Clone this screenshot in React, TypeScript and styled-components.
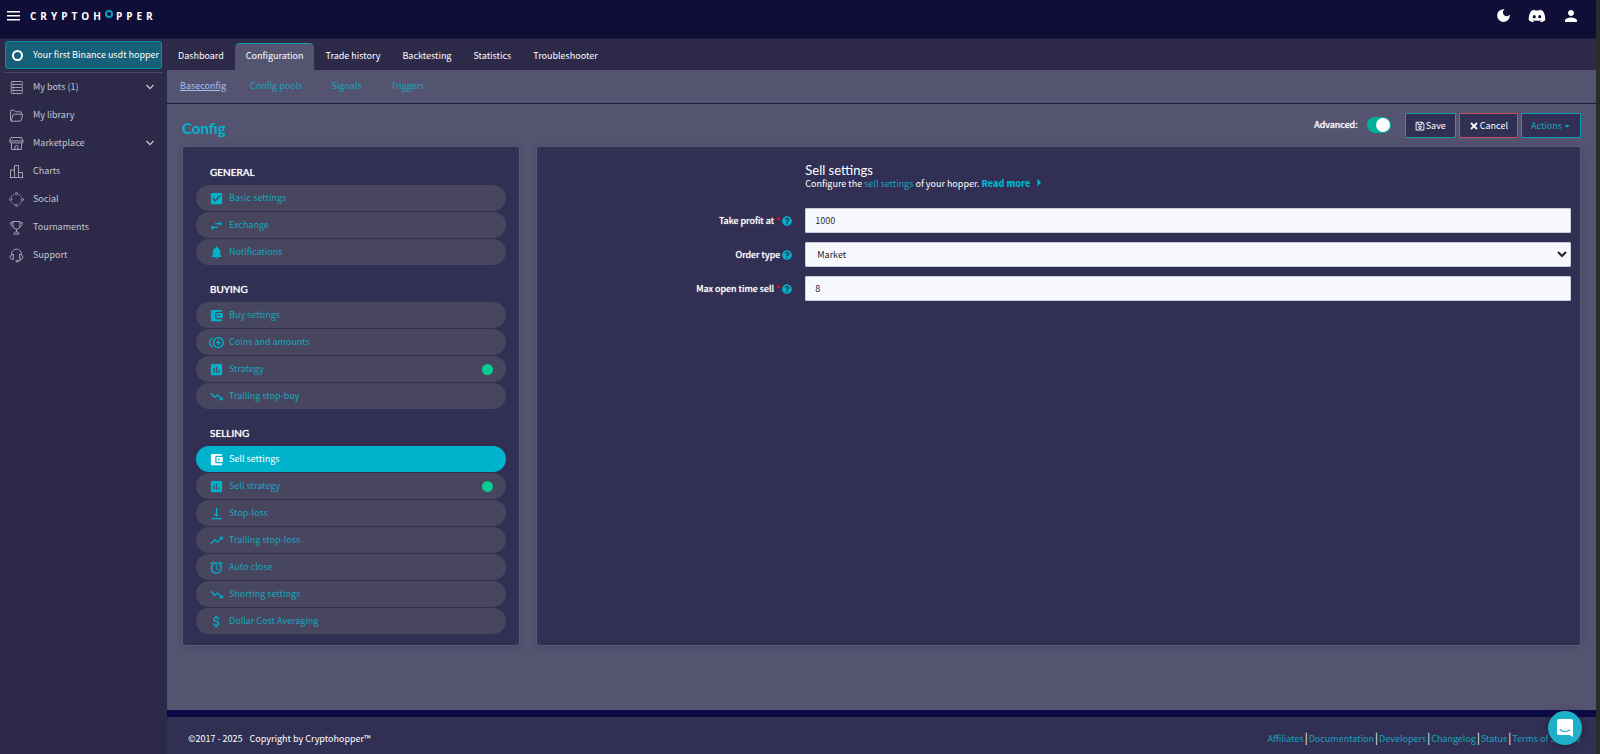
import React, { useState } from "react";
import styled, { createGlobalStyle, css } from "styled-components";
import {
  MdAccountBalanceWallet,
  MdAlarm,
  MdAssessment,
  MdAttachMoney,
  MdCheckBox,
  MdControlPointDuplicate,
  MdDarkMode,
  MdNotifications,
  MdPerson,
  MdSwapHoriz,
  MdTrendingDown,
  MdTrendingUp,
  MdVerticalAlignBottom,
} from "react-icons/md";
import { FaCaretDown, FaCaretRight, FaDiscord, FaQuestionCircle, FaRegSave, FaTimes } from "react-icons/fa";

const color = {
  topbar: "#100e36",
  chrome: "#2c2a48",
  page: "#545370",
  panel: "#312f53",
  panelEdge: "#5b5877",
  pill: "#48465f",
  teal: "#00b3cc",
  link: "#16a5be",
  navy: "#0c0a45",
  white: "#ffffff",
};

const bodyFont = `"Noto Sans CJK SC", "Noto Sans", sans-serif`;
const headFont = `Lato, "Open Sans", sans-serif`;

const GlobalStyle = createGlobalStyle`
  *, *::before, *::after { box-sizing: border-box; }
  body {
    margin: 0;
    background: ${color.page};
    color: ${color.white};
    font-family: ${bodyFont};
    font-size: 9px;
    line-height: 16px;
  }
  a { color: inherit; text-decoration: none; }
  ul { list-style: none; margin: 0; padding: 0; }
  button, input, select { font: inherit; color: inherit; }
  h1, h2, h3, p { margin: 0; }
  svg { display: block; flex: none; }
`;

const Page = styled.div`
  min-height: 100vh;
  display: flex;
  flex-direction: column;
  border-right: 4px solid #2b2b2b;
`;

const TopBar = styled.header`
  height: 39px;
  padding: 0 16px 7px 7px;
  display: flex;
  align-items: center;
  background: ${color.topbar};
  border-bottom: 1px solid #1f1b40;
`;

const IconButton = styled.button`
  display: grid;
  place-items: center;
  padding: 0;
  border: 0;
  background: none;
  cursor: pointer;
`;

const Logo = styled.a`
  display: flex;
  align-items: center;
  margin-left: 10px;
  font: 700 10px/12px "Open Sans", sans-serif;
  letter-spacing: 4px;
`;

const LogoRing = styled.span`
  width: 8px;
  height: 8px;
  margin: 0 3px 4px 0;
  border: 2px solid #0b9fb8;
  border-radius: 50%;
`;

const TopActions = styled.nav`
  display: flex;
  align-items: center;
  gap: 16px;
  margin-left: auto;
`;

const Body = styled.div`
  flex: 1;
  display: flex;
`;

const Sidebar = styled.aside`
  flex: none;
  width: 167px;
  padding: 2px 5px 0;
  background: ${color.chrome};
`;

const HopperLink = styled.a`
  display: flex;
  align-items: center;
  height: 28px;
  padding-left: 6px;
  border: 1px solid #0d8da0;
  border-radius: 3px;
  background: #16607a;
  white-space: nowrap;
`;

const HopperRing = styled.span`
  width: 11px;
  height: 11px;
  margin-right: 10px;
  border: 2px solid ${color.white};
  border-radius: 50%;
`;

const SideList = styled.ul`
  margin-top: 3px;
  border-top: 1px solid #4c4a67;
`;

const SideLink = styled.a`
  display: flex;
  align-items: center;
  height: 28px;
  padding: 0 8px 0 4px;
  color: #c6c5d1;

  span {
    flex: 1;
    margin-left: 9px;
  }
`;

const Main = styled.main`
  flex: 1;
  min-width: 0;
  display: flex;
  flex-direction: column;
  background: ${color.page};
`;

const Tabs = styled.nav`
  display: flex;
  align-items: flex-end;
  height: 31px;
  background: ${color.chrome};
`;

const Tab = styled.a<{ $active?: boolean }>`
  height: 27px;
  padding: 4px 11px 0;
  border-top: 1px solid transparent;
  border-radius: 5px 5px 0 0;
  ${(p) =>
    p.$active &&
    css`
      background: ${color.page};
      border-top-color: #1c9ab0;
    `}
`;

const SubTabs = styled.nav`
  display: flex;
  align-items: center;
  height: 34px;
  padding: 0 13px 2px;
  border-bottom: 1px solid #1c1947;
`;

const SubTab = styled.a<{ $active?: boolean }>`
  margin-right: ${(p) => (p.$active ? 24 : 29)}px;
  color: ${(p) => (p.$active ? "#a3bdf5" : color.link)};
  text-decoration: ${(p) => (p.$active ? "underline" : "none")};
`;

const Content = styled.div`
  flex: 1;
  padding: 9px 15px 64px;
`;

const ContentHead = styled.div`
  display: flex;
  align-items: flex-start;
  gap: 3px;
  height: 33px;
`;

const Title = styled.h1`
  flex: 1;
  padding-top: 7px;
  font: 700 15px/16px ${headFont};
  color: ${color.teal};
`;

const strong = css`
  text-shadow: 0 0 1px currentColor;
`;

const SwitchLabel = styled.label`
  display: flex;
  align-items: center;
  gap: 9px;
  height: 24px;
  margin-right: 11px;
  ${strong}
`;

const Switch = styled.input`
  appearance: none;
  width: 24px;
  height: 16px;
  margin: 0;
  padding: 1px;
  border-radius: 8px;
  background: #8886a0;
  cursor: pointer;

  &::before {
    content: "";
    display: block;
    width: 14px;
    height: 14px;
    border-radius: 50%;
    background: ${color.white};
  }
  &:checked {
    background: #00b09b;
  }
  &:checked::before {
    margin-left: auto;
  }
`;

const Button = styled.button<{ $edge: string; $ink?: string }>`
  display: flex;
  align-items: center;
  gap: 1px;
  height: 25px;
  padding: 0 9px;
  border: 1px solid ${(p) => p.$edge};
  border-radius: 1px;
  background: ${color.panel};
  color: ${(p) => p.$ink || color.white};
  cursor: pointer;
`;

const Columns = styled.div`
  display: grid;
  grid-template-columns: minmax(240px, 338px) 1fr;
  gap: 16px;
`;

const Panel = styled.section`
  border: 1px solid ${color.panelEdge};
  border-radius: 3px;
  background: ${color.panel};
  box-shadow: 0 1px 6px rgba(40, 36, 80, 0.2);
`;

const MenuPanel = styled(Panel)`
  padding: 1px 13px 11px;
`;

const Group = styled.div`
  padding-top: 14px;
`;

const GroupTitle = styled.h2`
  padding: 0 14px 3px;
  font: 400 10px/20px ${headFont};
  ${strong}
`;

const GroupList = styled.ul`
  display: grid;
  gap: 1px;
`;

const Pill = styled.a<{ $active?: boolean }>`
  display: flex;
  align-items: center;
  gap: 5px;
  height: 26px;
  padding: 0 13px 0 13px;
  border-radius: 13px;
  background: ${(p) => (p.$active ? color.teal : color.pill)};
  color: ${(p) => (p.$active ? color.white : color.link)};

  svg {
    color: ${(p) => (p.$active ? color.white : color.teal)};
  }
`;

const StatusDot = styled.span`
  width: 11px;
  height: 11px;
  margin-left: auto;
  border-radius: 50%;
  background: #06cc95;
`;

const Form = styled.form`
  display: grid;
  grid-template-columns: 1fr 3fr;
  gap: 9px 13px;
  padding: 16px 9px 20px 0;
`;

const Intro = styled.div`
  grid-column: 2;
  padding-bottom: 8px;
`;

const IntroTitle = styled.h2`
  font: 400 13px/14px ${headFont};
`;

const IntroText = styled.p`
  line-height: 14px;

  a {
    color: ${color.link};
  }
`;

const ReadMore = styled.a`
  && {
    color: ${color.teal};
    font-weight: 900;
  }
  svg {
    display: inline-block;
    margin-left: 2px;
    vertical-align: -1px;
  }
`;

const FieldLabel = styled.label`
  display: flex;
  justify-content: flex-end;
  align-items: center;
  gap: 2px;
  ${strong}

  svg {
    color: ${color.teal};
  }
`;

const Required = styled.span`
  color: #f5081c;
`;

const fieldBox = css`
  width: 100%;
  height: 25px;
  padding: 0 9px;
  border: 1px solid #c9c8da;
  border-radius: 1px;
  background: #f8f9ff;
  color: #2c2c36;
`;

const TextField = styled.input`
  ${fieldBox}
`;

const SelectField = styled.select`
  ${fieldBox}
  padding: 0 4px 0 7px;
  color: #222;
`;

const Footer = styled.footer`
  display: flex;
  justify-content: space-between;
  height: 45px;
  padding: 14px 15px 0 21px;
  border-top: 7px solid ${color.navy};
  background: ${color.panel};
`;

const Copyright = styled.p`
  display: flex;
  gap: 7px;
`;

const FooterLinks = styled.nav`
  display: flex;

  a {
    color: ${color.link};
  }
  a + a::before {
    content: "|";
    margin: 0 1px;
    font-size: 11px;
    line-height: 1;
    color: ${color.white};
  }
`;

const ChatButton = styled.button`
  position: fixed;
  right: 18px;
  bottom: 9px;
  display: grid;
  place-items: center;
  width: 34px;
  height: 34px;
  padding: 0;
  border: 0;
  border-radius: 50%;
  background: #1eb0c8;
  box-shadow: 0 1px 8px rgba(0, 0, 0, 0.3);
  cursor: pointer;
`;

const LineIcon = ({ children }: { children: React.ReactNode }) => (
  <svg width="15" height="15" viewBox="0 0 15 15" fill="none" stroke="#a3a2b4" strokeWidth="1" strokeLinejoin="round" strokeLinecap="round">
    {children}
  </svg>
);

const Chevron = () => (
  <svg width="8" height="6" viewBox="0 0 8 6" fill="none" stroke="#c9c8d4" strokeWidth="1.3">
    <path d="M.5 1 4 4.6 7.5 1" />
  </svg>
);

const sideItems = [
  {
    label: "My bots (1)",
    open: true,
    icon: (
      <LineIcon>
        <rect x="2" y="1.5" width="11.5" height="3" rx="1.2" />
        <rect x="2" y="4.5" width="11.5" height="3" rx="1.2" />
        <rect x="2" y="7.5" width="11.5" height="3" rx="1.2" />
        <rect x="2" y="10.5" width="11.5" height="3" rx="1.2" />
        <path d="M4.2 3h.2M4.2 6h.2M4.2 9h.2M4.2 12h.2" />
      </LineIcon>
    ),
  },
  {
    label: "My library",
    icon: (
      <LineIcon>
        <path d="M2.6 13.2 1.5 12V3.2c0-.6.4-1 1-1h2.7l1.4 1.6h4.7c.6 0 1 .4 1 1v1.4" />
        <path d="M4.6 6.2h9.1L12.3 12c-.2.8-.7 1.2-1.5 1.2H2.6z" />
      </LineIcon>
    ),
  },
  {
    label: "Marketplace",
    open: true,
    icon: (
      <LineIcon>
        <path d="M2.5 1.5h10L14 5H1z" />
        <path d="M1 5v1.2c0 1.4 2.2 1.4 2.2 0 0 1.4 2.8 1.4 2.8 0 0 1.4 3 1.4 3 0 0 1.4 2.8 1.4 2.8 0 0 1.4 2.2 1.4 2.2 0V5" />
        <path d="M2.5 7.5v6h10v-6M6 13.5v-2.7c0-1.7 3-1.7 3 0v2.7" />
      </LineIcon>
    ),
  },
  {
    label: "Charts",
    icon: (
      <LineIcon>
        <path d="M1.5 13.5V6h4v7.5M5.5 13.5v-12h4v12M9.5 13.5v-5h4v5M1 13.5h13" />
      </LineIcon>
    ),
  },
  {
    label: "Social",
    icon: (
      <LineIcon>
        <circle cx="7.5" cy="1.6" r="1.1" />
        <circle cx="7.5" cy="13.4" r="1.1" />
        <circle cx="1.6" cy="7.5" r="1.1" />
        <circle cx="13.4" cy="7.5" r="1.1" />
        <path
          strokeLinecap="butt"
          strokeDasharray="1.5 1"
          d="M9.6 2.4a5.4 5.4 0 0 1 3.2 3.2M12.7 9.5a5.4 5.4 0 0 1-3.2 3.2M5.4 12.7a5.4 5.4 0 0 1-3.2-3.2M2.2 5.5a5.4 5.4 0 0 1 3.2-3.1"
        />
      </LineIcon>
    ),
  },
  {
    label: "Tournaments",
    icon: (
      <LineIcon>
        <path d="M4 1.5h7v3.7c0 2.4-1.4 4-3.5 4S4 7.6 4 5.2zM4 2.7H1.6c0 2.5 1 4 2.9 4.3M11 2.7h2.4c0 2.5-1 4-2.9 4.3M7.5 9.2v2.6M5 13.7c0-1.2 1-1.9 2.5-1.9s2.5.7 2.5 1.9z" />
      </LineIcon>
    ),
  },
  {
    label: "Support",
    icon: (
      <LineIcon>
        <path d="M2.6 6.5V6a4.9 4.9 0 0 1 9.8 0v.5M4.3 6.5v5c-1.9 0-3.1-1-3.1-2.5s1.2-2.5 3.1-2.5zM10.7 6.5v5c1.9 0 3.1-1 3.1-2.5s-1.2-2.5-3.1-2.5zM12.3 11.3c-.4 1.2-1.5 1.9-3 1.9" />
        <circle cx="8" cy="13.2" r="1" />
      </LineIcon>
    ),
  },
];

const tabs = ["Dashboard", "Configuration", "Trade history", "Backtesting", "Statistics", "Troubleshooter"];
const subTabs = ["Baseconfig", "Config pools", "Signals", "Triggers"];

type MenuItem = { label: string; Icon: React.ComponentType<{ size?: number }>; dot?: boolean; active?: boolean };

const groups: { title: string; items: MenuItem[] }[] = [
  {
    title: "GENERAL",
    items: [
      { label: "Basic settings", Icon: MdCheckBox },
      { label: "Exchange", Icon: MdSwapHoriz },
      { label: "Notifications", Icon: MdNotifications },
    ],
  },
  {
    title: "BUYING",
    items: [
      { label: "Buy settings", Icon: MdAccountBalanceWallet },
      { label: "Coins and amounts", Icon: MdControlPointDuplicate },
      { label: "Strategy", Icon: MdAssessment, dot: true },
      { label: "Trailing stop-buy", Icon: MdTrendingDown },
    ],
  },
  {
    title: "SELLING",
    items: [
      { label: "Sell settings", Icon: MdAccountBalanceWallet, active: true },
      { label: "Sell strategy", Icon: MdAssessment, dot: true },
      { label: "Stop-loss", Icon: MdVerticalAlignBottom },
      { label: "Trailing stop-loss", Icon: MdTrendingUp },
      { label: "Auto close", Icon: MdAlarm },
      { label: "Shorting settings", Icon: MdTrendingDown },
      { label: "Dollar Cost Averaging", Icon: MdAttachMoney },
    ],
  },
];

const footerLinks = ["Affiliates", "Documentation", "Developers", "Changelog", "Status", "Terms of Service"];

export default function App() {
  const [advanced, setAdvanced] = useState(true);
  const [profit, setProfit] = useState("1000");
  const [openTime, setOpenTime] = useState("8");

  return (
    <>
      <GlobalStyle />
      <Page>
        <TopBar>
          <IconButton aria-label="Menu">
            <svg width="13" height="10" viewBox="0 0 13 10" fill="#fff">
              <path d="M0 0h13v1.5H0zM0 4h13v1.5H0zM0 8h13v1.5H0z" />
            </svg>
          </IconButton>
          <Logo href="#home">
            CRYPTOH
            <LogoRing />
            PPER
          </Logo>
          <TopActions>
            <IconButton aria-label="Dark mode">
              <MdDarkMode size={17} />
            </IconButton>
            <IconButton aria-label="Discord">
              <FaDiscord size={18} />
            </IconButton>
            <IconButton aria-label="Account">
              <MdPerson size={18} />
            </IconButton>
          </TopActions>
        </TopBar>
        <Body>
          <Sidebar>
            <HopperLink href="#hopper">
              <HopperRing />
              Your first Binance usdt hopper
            </HopperLink>
            <SideList>
              {sideItems.map((item) => (
                <li key={item.label}>
                  <SideLink href="#side">
                    {item.icon}
                    <span>{item.label}</span>
                    {item.open && <Chevron />}
                  </SideLink>
                </li>
              ))}
            </SideList>
          </Sidebar>
          <Main>
            <Tabs>
              {tabs.map((t) => (
                <Tab key={t} href="#tab" $active={t === "Configuration"}>
                  {t}
                </Tab>
              ))}
            </Tabs>
            <SubTabs>
              {subTabs.map((t) => (
                <SubTab key={t} href="#subtab" $active={t === "Baseconfig"}>
                  {t}
                </SubTab>
              ))}
            </SubTabs>
            <Content>
              <ContentHead>
                <Title>Config</Title>
                <SwitchLabel>
                  Advanced:
                  <Switch type="checkbox" checked={advanced} onChange={(e) => setAdvanced(e.target.checked)} />
                </SwitchLabel>
                <Button $edge="#1a9e9a">
                  <FaRegSave size={10} />
                  Save
                </Button>
                <Button $edge="#c9505c">
                  <FaTimes size={10} />
                  Cancel
                </Button>
                <Button $edge="#0aa0b8" $ink={color.link}>
                  Actions
                  <FaCaretDown size={8} />
                </Button>
              </ContentHead>
              <Columns>
                <MenuPanel>
                  {groups.map((group) => (
                    <Group key={group.title}>
                      <GroupTitle>{group.title}</GroupTitle>
                      <GroupList>
                        {group.items.map(({ label, Icon, dot, active }) => (
                          <li key={label}>
                            <Pill href="#section" $active={active}>
                              <Icon size={15} />
                              {label}
                              {dot && <StatusDot />}
                            </Pill>
                          </li>
                        ))}
                      </GroupList>
                    </Group>
                  ))}
                </MenuPanel>
                <Panel>
                  <Form>
                    <Intro>
                      <IntroTitle>Sell settings</IntroTitle>
                      <IntroText>
                        Configure the <a href="#sell">sell settings</a> of your hopper.{" "}
                        <ReadMore href="#more">
                          Read more <FaCaretRight size={11} />
                        </ReadMore>
                      </IntroText>
                    </Intro>
                    <FieldLabel htmlFor="profit">
                      Take profit at <Required>*</Required>
                      <FaQuestionCircle size={10} />
                    </FieldLabel>
                    <TextField id="profit" value={profit} onChange={(e) => setProfit(e.target.value)} />
                    <FieldLabel htmlFor="order">
                      Order type
                      <FaQuestionCircle size={10} />
                    </FieldLabel>
                    <SelectField id="order" defaultValue="Market">
                      <option>Market</option>
                      <option>Limit</option>
                    </SelectField>
                    <FieldLabel htmlFor="openTime">
                      Max open time sell <Required>*</Required>
                      <FaQuestionCircle size={10} />
                    </FieldLabel>
                    <TextField id="openTime" value={openTime} onChange={(e) => setOpenTime(e.target.value)} />
                  </Form>
                </Panel>
              </Columns>
            </Content>
            <Footer>
              <Copyright>
                <span>©2017 - 2025</span>
                <span>Copyright by Cryptohopper™</span>
              </Copyright>
              <FooterLinks>
                {footerLinks.map((l) => (
                  <a key={l} href="#footer">
                    {l}
                  </a>
                ))}
              </FooterLinks>
            </Footer>
          </Main>
        </Body>
      </Page>
      <ChatButton aria-label="Chat">
        <svg width="16" height="18" viewBox="0 0 16 18">
          <path d="M2 0h12a2 2 0 0 1 2 2v16l-3.5-2H2a2 2 0 0 1-2-2V2a2 2 0 0 1 2-2z" fill="#fff" />
          <path d="M3 10.8c3 2.3 7 2.3 10 0" fill="none" stroke="#1eb0c8" strokeWidth="1.1" strokeLinecap="round" />
        </svg>
      </ChatButton>
    </>
  );
}
